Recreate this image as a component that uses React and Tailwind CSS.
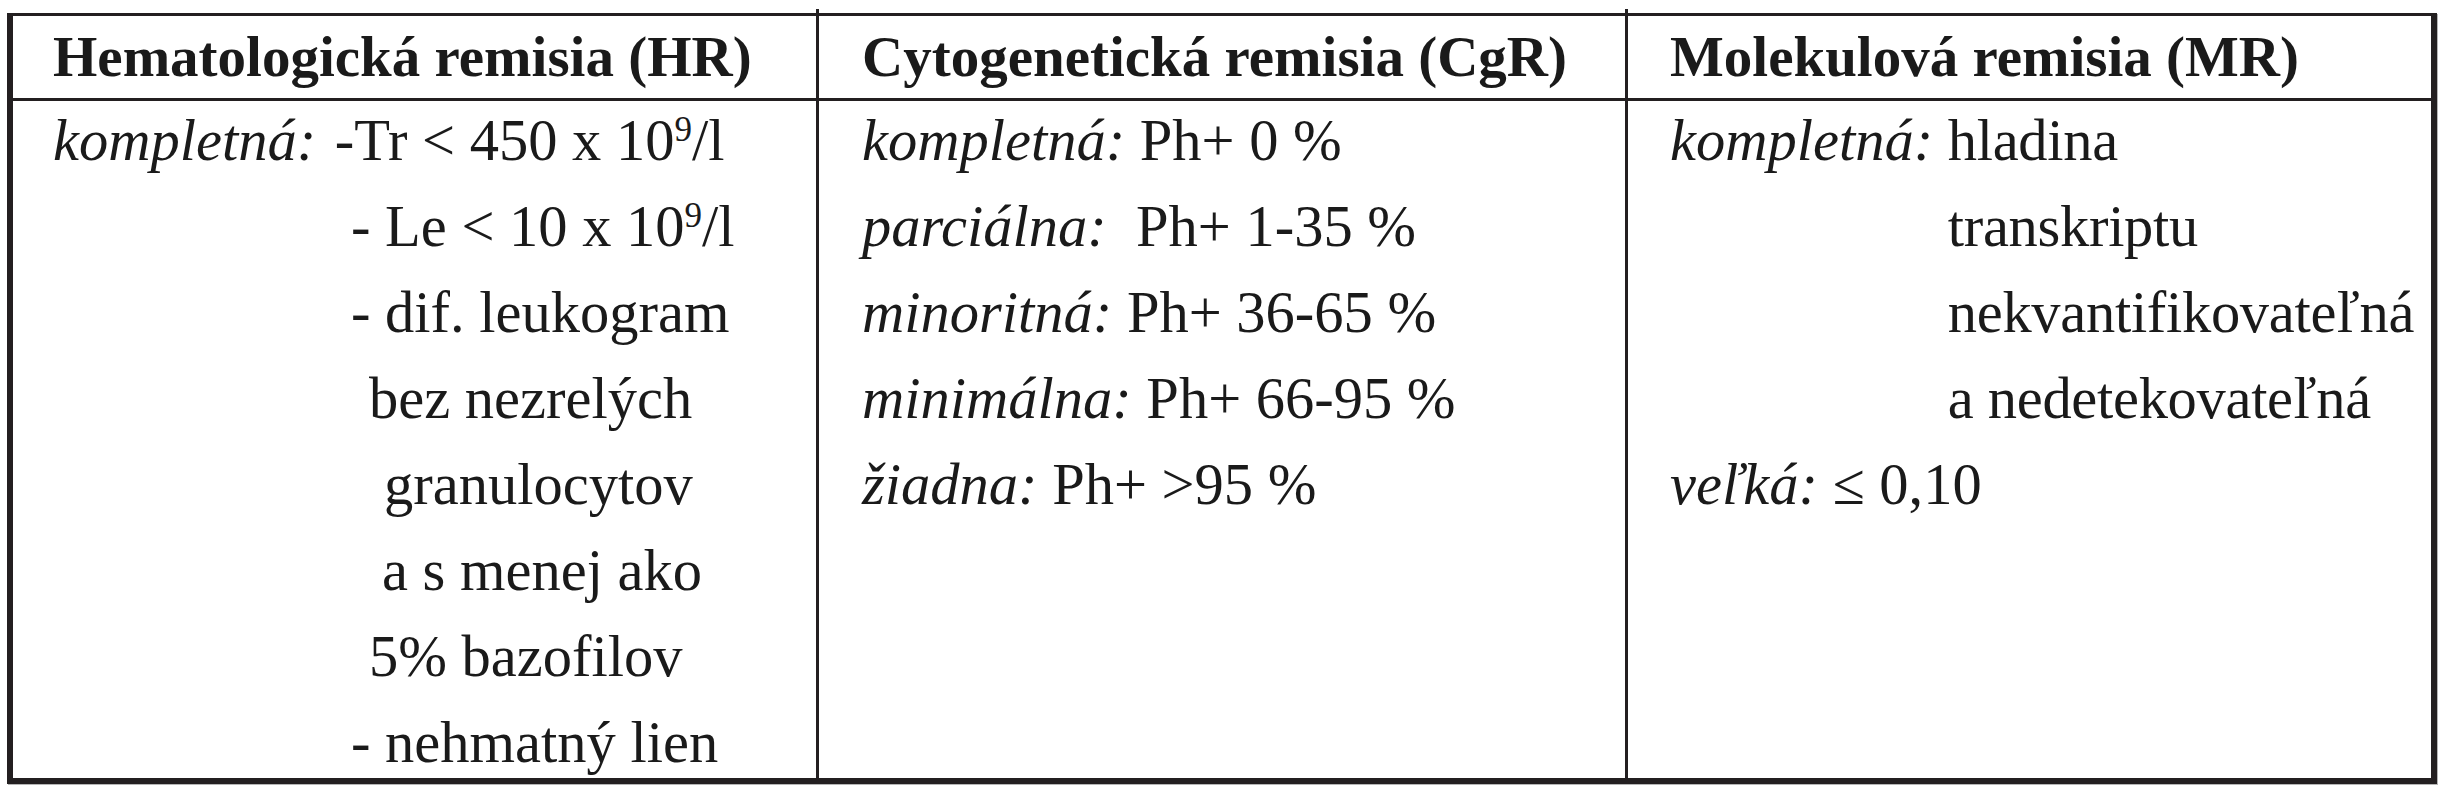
import React from "react";

const Label = ({ children }) => <i className="italic">{children}</i>;

const Sup = ({ children }) => (
  <sup className="text-[0.6em] -top-[0.55em]">{children}</sup>
);

// little stub of the column rule poking above the top border, like in the scan
const Tick = () => (
  <span className="absolute -right-[3px] -top-[7px] w-[3px] h-[4px] bg-[#231f20]" />
);

const App = () => {
  return (
    <div className="min-h-screen bg-white pt-[13px] pl-[7px] font-['Liberation_Serif','Times_New_Roman',serif] text-[#1a1a1a]">
      <div className="w-[2430px] h-[771px] border-[#231f20] border-t-[3px] border-l-[6px] border-r-[6px] border-b-[6px] shadow-[1px_1px_0_#b5b5b5] grid grid-cols-[806px_809px_803px] grid-rows-[85px_minmax(0,1fr)]">
        {/* header */}
        <div className="relative border-r-[3px] border-b-[3px] border-[#231f20] pl-[40px] text-[57px] leading-[82px] font-bold whitespace-nowrap">
          Hematologická remisia (HR)
          <Tick />
        </div>
        <div className="relative border-r-[3px] border-b-[3px] border-[#231f20] pl-[43px] text-[57px] leading-[82px] font-bold whitespace-nowrap">
          Cytogenetická remisia (CgR)
          <Tick />
        </div>
        <div className="border-b-[3px] border-[#231f20] pl-[42px] text-[57px] leading-[82px] font-bold whitespace-nowrap">
          Molekulová remisia (MR)
        </div>

        {/* body */}
        <div className="border-r-[3px] border-[#231f20] pl-[40px] text-[58.5px] leading-[86px] whitespace-nowrap">
          <div className="-mt-[3px]">
            <p>
              <Label>kompletná:</Label> <span className="pl-[4px]">-Tr &lt; 450 x 10<Sup>9</Sup>/l</span>
            </p>
            <p className="pl-[298px]">
              - Le &lt; 10 x 10<Sup>9</Sup>/l
            </p>
            <p className="pl-[298px]">- dif. leukogram</p>
            <p className="pl-[316px]">bez nezrelých</p>
            <p className="pl-[331px]">granulocytov</p>
            <p className="pl-[329px]">a s menej ako</p>
            <p className="pl-[316px]">5% bazofilov</p>
            <p className="pl-[298px]">- nehmatný lien</p>
          </div>
        </div>
        <div className="border-r-[3px] border-[#231f20] pl-[43px] text-[58.5px] leading-[86px] whitespace-nowrap">
          <div className="-mt-[3px]">
            <p>
              <Label>kompletná:</Label> Ph+ 0 %
            </p>
            <p>
              <Label>parciálna:</Label>&nbsp; Ph+ 1-35 %
            </p>
            <p>
              <Label>minoritná:</Label> Ph+ 36-65 %
            </p>
            <p>
              <Label>minimálna:</Label> Ph+ 66-95 %
            </p>
            <p>
              <Label>žiadna:</Label> Ph+ &gt;95 %
            </p>
          </div>
        </div>
        <div className="pl-[42px] text-[58.5px] leading-[86px] whitespace-nowrap">
          <div className="-mt-[3px]">
            <div className="flex">
              <Label>kompletná:&nbsp;</Label>
              <div className="flex flex-col tracking-[-0.3px]">
                <span>hladina</span>
                <span>transkriptu</span>
                <span>nekvantifikovateľná</span>
                <span>a nedetekovateľná</span>
              </div>
            </div>
            <p>
              <Label>veľká:</Label> ≤ 0,10
            </p>
          </div>
        </div>
      </div>
    </div>
  );
};

export default App;
